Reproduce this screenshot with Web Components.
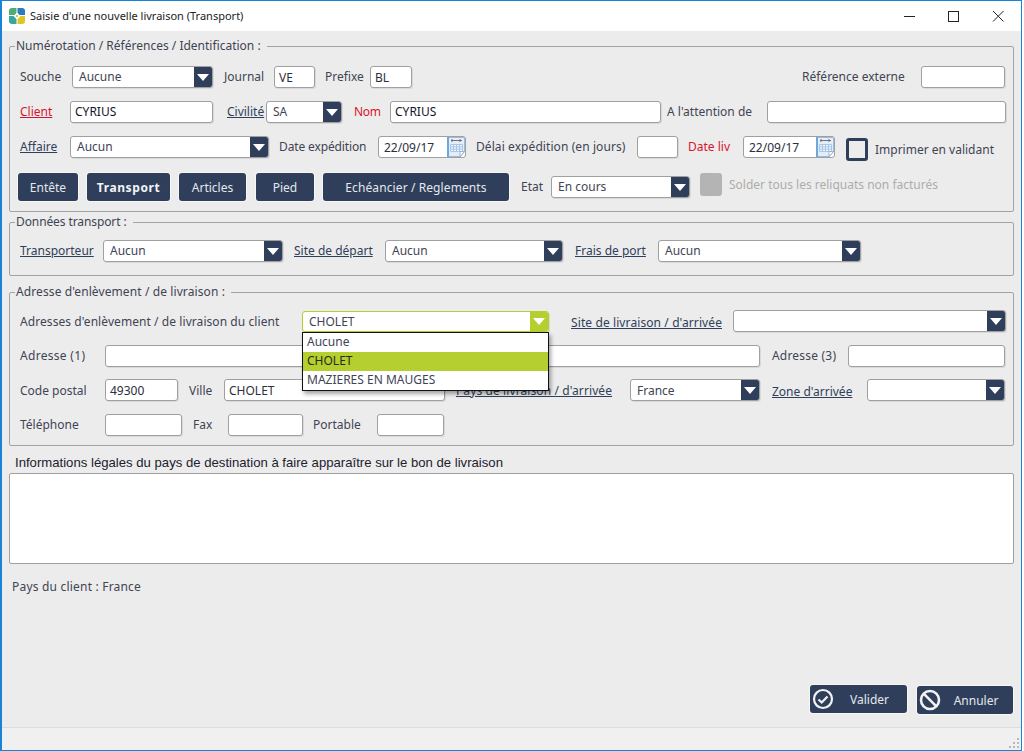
<!DOCTYPE html>
<html lang="fr">
<head>
<meta charset="utf-8">
<title>Saisie d'une nouvelle livraison</title>
<style>
	html, body { margin: 0; background: #fff; }
	body { font: 12px "Noto Sans", sans-serif; color: #3f4454; }
</style>
</head>
<body>
<app-window>
	<title-bar slot="title">Saisie d'une nouvelle livraison (Transport)</title-bar>

	<group-box legend="Numérotation / Références / Identification :" style="--pad-bottom:10px">
		<form-row>
			<x-label style="width:52px">Souche</x-label>
			<x-combo value="Aucune" style="width:141px"></x-combo>
			<x-label style="width:50px;margin-left:11px">Journal</x-label>
			<x-input value="VE" style="width:41px"></x-input>
			<x-label style="width:45px;margin-left:10px">Prefixe</x-label>
			<x-input value="BL" style="width:42px"></x-input>
			<x-label style="width:119px;margin-left:390px">Référence externe</x-label>
			<x-input style="width:84px"></x-input>
		</form-row>
		<form-row>
			<x-label kind="required-link" style="width:50px">Client</x-label>
			<x-input value="CYRIUS" strong style="width:143px"></x-input>
			<x-label kind="link" style="width:39px;margin-left:14px">Civilité</x-label>
			<x-combo value="SA" style="width:76px"></x-combo>
			<x-label kind="required" style="width:36px;margin-left:12px;letter-spacing:-.3px">Nom</x-label>
			<x-input value="CYRIUS" strong style="width:271px"></x-input>
			<x-label style="width:100px;margin-left:6px">A l'attention de</x-label>
			<x-input style="width:239px"></x-input>
		</form-row>
		<form-row>
			<x-label kind="link" style="width:50px">Affaire</x-label>
			<x-combo value="Aucun" style="width:199px"></x-combo>
			<x-label style="width:99px;margin-left:10px;letter-spacing:-.13px">Date expédition</x-label>
			<x-date value="22/09/17" style="width:88px"></x-date>
			<x-label style="width:161px;margin-left:10px;letter-spacing:.08px">Délai expédition (en jours)</x-label>
			<x-input style="width:41px"></x-input>
			<x-label kind="required" style="width:55px;margin-left:10px">Date liv</x-label>
			<x-date value="22/09/17" style="width:92px"></x-date>
			<x-check style="align-self:flex-start;margin:2px 0 -3px 11px">Imprimer en validant</x-check>
		</form-row>
		<form-row class="tabs">
			<x-button style="width:60px">Entête</x-button>
			<x-button bold style="width:83px;margin-left:9px;letter-spacing:.6px">Transport</x-button>
			<x-button style="width:67px;margin-left:9px">Articles</x-button>
			<x-button style="width:58px;margin-left:10px">Pied</x-button>
			<x-button style="width:186px;margin-left:9px;letter-spacing:.1px">Echéancier / Reglements</x-button>
			<x-label style="width:30px;margin-left:12px">Etat</x-label>
			<x-combo value="En cours" style="width:139px"></x-combo>
			<x-check disabled style="align-self:flex-start;margin-left:10px">Solder tous les reliquats non facturés</x-check>
		</form-row>
	</group-box>

	<group-box legend="Données transport :" gap="2" style="--pad-top:10px;--pad-bottom:13px;--legend-ls:-.1px">
		<form-row>
			<x-label kind="link" style="width:83px">Transporteur</x-label>
			<x-combo value="Aucun" style="width:180px"></x-combo>
			<x-label kind="link" style="width:91px;margin-left:11px">Site de départ</x-label>
			<x-combo value="Aucun" style="width:178px"></x-combo>
			<x-label kind="link" style="width:83px;margin-left:12px">Frais de port</x-label>
			<x-combo value="Aucun" style="width:203px"></x-combo>
		</form-row>
	</group-box>

	<group-box legend="Adresse d'enlèvement / de livraison :" gap="8" style="--legend-ls:.1px;--row-gap:12px;--pad-top:10px">
		<form-row style="margin-bottom:1px">
			<x-label style="width:282px;margin-top:2px;letter-spacing:.07px">Adresses d'enlèvement / de livraison du client</x-label>
			<x-combo value="CHOLET" active style="width:247px;line-height:19px">
				<x-option>Aucune</x-option>
				<x-option selected>CHOLET</x-option>
				<x-option>MAZIERES EN MAUGES</x-option>
			</x-combo>
			<x-label kind="link" style="width:162px;margin:4px 0 0 22px;letter-spacing:.1px">Site de livraison / d'arrivée</x-label>
			<x-combo style="width:273px"></x-combo>
		</form-row>
		<form-row>
			<x-label style="width:85px;letter-spacing:.3px">Adresse (1)</x-label>
			<x-input style="width:655px"></x-input>
			<x-label style="width:76px;margin-left:12px;letter-spacing:.2px">Adresse (3)</x-label>
			<x-input style="width:157px"></x-input>
		</form-row>
		<form-row>
			<x-label style="width:85px;margin-top:1px">Code postal</x-label>
			<x-input value="49300" style="width:73px"></x-input>
			<x-label style="width:35px;margin:1px 0 0 11px">Ville</x-label>
			<x-input value="CHOLET" style="width:221px"></x-input>
			<x-label kind="link" style="width:174px;margin:1px 0 0 11px;letter-spacing:.1px">Pays de livraison / d'arrivée</x-label>
			<x-combo value="France" style="width:130px;line-height:21px"></x-combo>
			<x-label kind="link" style="width:95px;margin:3px 0 0 12px">Zone d'arrivée</x-label>
			<x-combo style="width:138px"></x-combo>
		</form-row>
		<form-row style="margin-top:1px">
			<x-label style="width:85px">Téléphone</x-label>
			<x-input style="width:77px"></x-input>
			<x-label style="width:35px;margin-left:11px">Fax</x-label>
			<x-input style="width:75px"></x-input>
			<x-label style="width:64px;margin-left:10px">Portable</x-label>
			<x-input style="width:67px"></x-input>
		</form-row>
	</group-box>

	<legal-box label="Informations légales du pays de destination à faire apparaître sur le bon de livraison"></legal-box>
	<x-label class="client-country" style="letter-spacing:.2px">Pays du client : France</x-label>

	<action-bar>
		<x-button icon="ok" style="width:97px;height:28px">Valider</x-button>
		<x-button icon="cancel" style="width:96px;height:28px;margin:1px 0 0 10px">Annuler</x-button>
	</action-bar>

	<status-bar slot="status"></status-bar>
</app-window>

<script>
const NAVY = '#2f3f5b';

function define(name, css, html, extra) {
	const tpl = document.createElement('template');
	tpl.innerHTML = `<style>${css}</style>${html}`;
	customElements.define(name, class extends HTMLElement {
		constructor() {
			super();
			this.attachShadow({ mode: 'open' }).appendChild(tpl.content.cloneNode(true));
		}
		connectedCallback() {
			if (extra) { extra(this, this.shadowRoot); }
		}
	});
}

define('app-window', `
	:host { display: flex; flex-direction: column; box-sizing: border-box; width: 1022px; height: 751px;
		border: 1px solid #1883d7; border-width: 1px 1px 1px 2px; background: #ececec; overflow: hidden; }
	main { flex: 1; display: flex; flex-direction: column; padding: 7px 7px 0 7px; min-height: 0; }
	::slotted(.client-country) { margin: 15px 0 0 3px; }
`, `<slot name="title"></slot><main><slot></slot></main><slot name="status"></slot>`);

define('title-bar', `
	:host { display: flex; align-items: center; height: 30px; background: #fff; flex: none; color: #222;
		font: 11px "Noto Sans", sans-serif; padding-left: 7px; }
	.logo { width: 16px; height: 16px; margin-right: 5px; }
	.text { flex: 1; margin-top: -1px; }
	.ctl { display: flex; margin: -1px 1px 0 0; }
	.ctl svg { width: 45px; height: 30px; display: block; }
`, `
	<svg class="logo" viewBox="0 0 16 16">
		<path d="M3 0h4.500v7H0V3a3 3 0 0 1 3-3z" fill="#4bad72"/>
		<path d="M8.500 0H13a3 3 0 0 1 3 3v4H8.500z" fill="#2b7db8"/>
		<path d="M0 8h7.500v8H3a3 3 0 0 1-3-3z" fill="#38a5a0"/>
		<path d="M8.500 8H16v5a3 3 0 0 1-3 3H8.500z" fill="#dcc820"/>
		<path d="M8 4.500 11.500 8 8 11.500 4.500 8z" fill="#fff"/>
		<circle cx="8" cy="8" r="1" fill="#d8a23a"/>
	</svg>
	<span class="text"><slot></slot></span>
	<div class="ctl">
		<svg viewBox="0 0 45 30"><path d="M19 15.500h11" stroke="#222" fill="none"/></svg>
		<svg viewBox="0 0 45 30"><rect x="18.500" y="10.500" width="10" height="10" stroke="#222" fill="none"/></svg>
		<svg viewBox="0 0 45 30"><path d="M18 10l10.500 10.500M28.500 10 18 20.500" stroke="#222" fill="none"/></svg>
	</div>
`);

define('group-box', `
	:host { display: block; flex: none; }
	fieldset { margin: 0; padding: var(--pad-top, 12px) 8px var(--pad-bottom, 9px) 10px; border: 1px solid #a3a3a3; border-radius: 2px; min-width: 0; }
	legend { padding: 0 6px 0 1px; margin-left: -5px; line-height: 16px; color: #3f4454; letter-spacing: var(--legend-ls, 0); }
	.rows { display: flex; flex-direction: column; gap: var(--row-gap, 13px); }
`, `<fieldset><legend></legend><div class="rows"><slot></slot></div></fieldset>`, (el, root) => {
	root.querySelector('legend').textContent = el.getAttribute('legend');
	if (el.hasAttribute('gap')) { el.style.marginTop = el.getAttribute('gap') + 'px'; }
});

define('form-row', `
	:host { display: flex; align-items: center; min-height: 22px; }
	:host(.tabs) { margin: 2px 0 0 -2px; min-height: 28px; }
`, `<slot></slot>`);

define('x-label', `
	:host { display: block; flex: none; white-space: nowrap; line-height: 16px; color: #3f4454; }
	:host([kind="link"]) { color: #2f3f5b; text-decoration: underline; }
	:host([kind="required"]) { color: #d8142c; }
	:host([kind="required-link"]) { color: #d8142c; text-decoration: underline; }
`, `<slot></slot>`);

define('x-input', `
	:host { display: block; flex: none; box-sizing: border-box; height: 22px; background: #fff;
		border: 1px solid #a0a0a0; border-radius: 3px; padding-left: 4px; line-height: 22px; color: #2b2f3c;
		box-shadow: 1px 1px 0 rgba(0,0,0,.08); overflow: hidden; white-space: nowrap; }
	:host([strong]) { color: #14172a; line-height: 20px; }
`, `<span></span>`, (el, root) => {
	root.querySelector('span').textContent = el.getAttribute('value') || '';
});

define('x-combo', `
	:host { display: flex; flex: none; position: relative; box-sizing: border-box; height: 22px; background: #fff;
		border: 1px solid #a0a0a0; border-radius: 3px; line-height: 19px; color: #3f4454;
		box-shadow: 1px 1px 0 rgba(0,0,0,.08); }
	:host([active]) { border-color: #b5cf30; height: 21px; }
	.value { flex: 1; padding-left: 6px; white-space: nowrap; overflow: hidden; }
	.arrow { flex: none; width: 18px; background: ${NAVY}; display: flex; align-items: center; justify-content: center; border-radius: 0 2px 2px 0; }
	:host([active]) .arrow { background: #b5cf30; }
	.popup { position: absolute; z-index: 5; left: -1px; right: -1px; top: 20px; background: #fff;
		border: 1px solid #111; box-shadow: 2px 3px 4px rgba(0,0,0,.35); }
	.popup:not(.has-items) { display: none; }
`, `
	<div class="value"></div>
	<div class="arrow"><svg width="12" height="7" viewBox="0 0 12 7"><path d="M0 0h12L6 7z" fill="#fff"/></svg></div>
	<div class="popup"><slot></slot></div>
`, (el, root) => {
	root.querySelector('.value').textContent = el.getAttribute('value') || '';
	if (el.children.length) { root.querySelector('.popup').classList.add('has-items'); }
});

define('x-option', `
	:host { display: block; height: 19px; line-height: 18px; padding-left: 4px; color: #3f4454; white-space: nowrap; }
	:host([selected]) { background: #b5cf30; color: #2a2a1a; }
`, `<slot></slot>`);

define('x-date', `
	:host { display: flex; flex: none; align-items: center; box-sizing: border-box; height: 22px; background: #fff;
		border: 1px solid #a0a0a0; border-radius: 3px; padding-left: 5px; color: #2b2f3c; }
	.v { flex: 1; }
	svg { display: block; }
`, `
	<span class="v"></span>
	<svg width="18" height="20" viewBox="0 0 18 20">
		<path d="M.5.500h17v14l-4 5H.5z" fill="#e3edf8" stroke="#9dbcdd"/>
		<rect x="1" y="1" width="16" height="4.500" fill="#e8eef5"/>
		<rect x="0" y="0" width="2" height="20" fill="#6aa8de"/>
		<path d="M4 3.500h11M5 2v3M13 2v3" stroke="#6b7280" fill="none"/>
		<path d="M3.500 7.500h12v7h-12zM3.500 9.800h12M3.500 12.200h12M6.500 7.500v7M9.500 7.500v7M12.500 7.500v7" stroke="#a9c6e8" fill="#f2f6fc"/>
		<path d="M13 19.800l4.500-5.300h-4.500z" fill="#fff" stroke="#7f9fc4" stroke-width=".7"/>
	</svg>
`, (el, root) => {
	root.querySelector('.v').textContent = el.getAttribute('value') || '';
});

define('x-check', `
	:host { display: flex; flex: none; align-items: center; color: #3f4454; white-space: nowrap; line-height: 16px; }
	.box { box-sizing: border-box; width: 22px; height: 23px; border: 3px solid ${NAVY}; border-radius: 3px; margin-right: 7px; }
	:host([disabled]) { color: #adadad; }
	:host([disabled]) .box { background: #b4b4b4; border-color: #b4b4b4; }
`, `<div class="box"></div><slot></slot>`);

define('x-button', `
	:host { display: flex; flex: none; align-items: center; justify-content: center; box-sizing: border-box; height: 28px;
		background: ${NAVY}; color: #e4e7ee; border-radius: 3px; box-shadow: 0 0 0 1px #f6f6f6; position: relative; white-space: nowrap; }
	:host([bold]) { font-weight: 700; color: #f2f4f8; }
	svg { display: none; position: absolute; left: 2px; top: 3px; }
	:host([icon]) { padding: 1px 0 0 22px; }
	:host([icon="ok"]) svg.ok, :host([icon="cancel"]) svg.cancel { display: block; }
`, `
	<svg class="ok" width="22" height="22" viewBox="0 0 22 22" fill="none" stroke="#f2f2f2"><circle cx="11" cy="11" r="9" stroke-width="2.200"/><path d="M6.500 11.500l3.200 3 5.800-6" stroke-width="2.200"/></svg>
	<svg class="cancel" width="22" height="22" viewBox="0 0 22 22" fill="none" stroke="#f2f2f2"><circle cx="11" cy="11" r="9" stroke-width="2.600"/><path d="M4.700 4.700l12.600 12.600" stroke-width="2.600"/></svg>
	<slot></slot>
`);

define('legal-box', `
	:host { display: block; flex: none; margin-top: 9px; }
	.cap { font: 13.15px "Liberation Sans", sans-serif; line-height: 16px; color: #23202e; padding-left: 6px; margin-bottom: 2px; }
	.area { box-sizing: border-box; height: 91px; background: #fff; border: 1px solid #a0a0a0; border-radius: 2px; }
`, `<div class="cap"></div><div class="area"></div>`, (el, root) => {
	root.querySelector('.cap').textContent = el.getAttribute('label');
});

define('action-bar', `
	:host { display: flex; justify-content: flex-end; margin-top: auto; padding: 0 1px 13px 0; align-items: flex-start; }
`, `<slot></slot>`);

define('status-bar', `
	:host { display: block; flex: none; height: 22px; background: #f0f0f0; border-top: 1px solid #dcdcdc; position: relative; }
	svg { position: absolute; right: 1px; bottom: 1px; }
`, `<svg width="12" height="12" viewBox="0 0 12 12" fill="#b8b8b8"><rect x="9" y="1" width="2" height="2"/><rect x="5" y="5" width="2" height="2"/><rect x="9" y="5" width="2" height="2"/><rect x="1" y="9" width="2" height="2"/><rect x="5" y="9" width="2" height="2"/><rect x="9" y="9" width="2" height="2"/></svg>`);
</script>
</body>
</html>
